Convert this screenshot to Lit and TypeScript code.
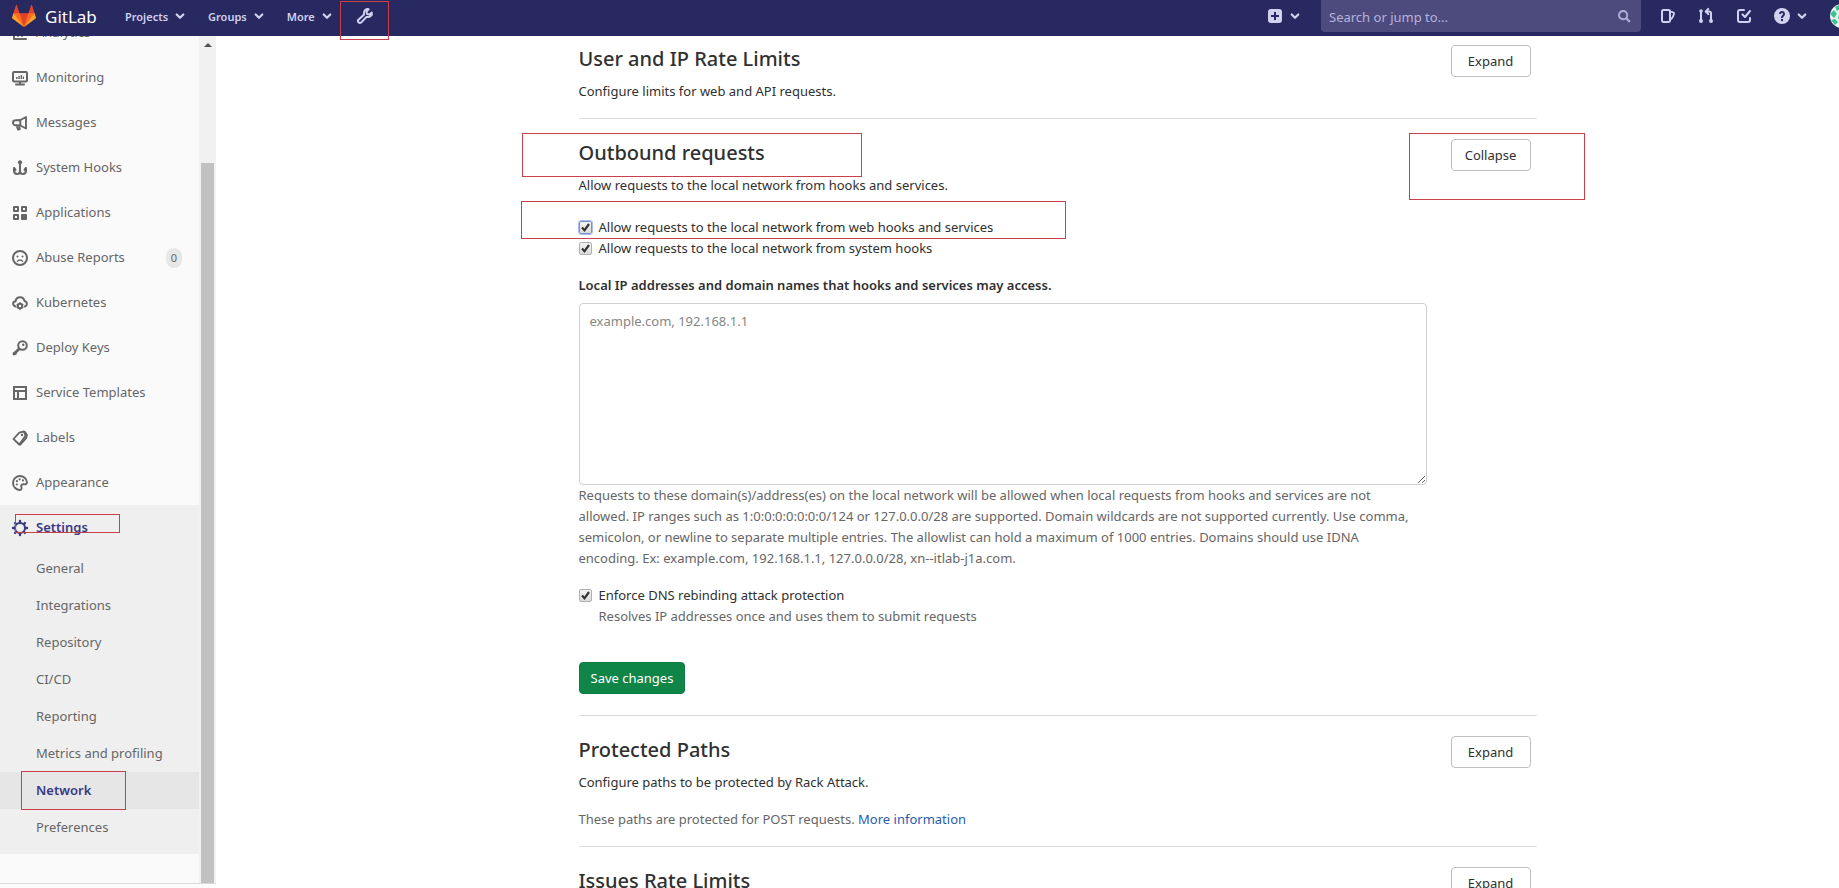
import { LitElement, html, css, svg, nothing } from "lit";
import { customElement, state } from "lit/decorators.js";
import { classMap } from "lit/directives/class-map.js";

const stroke = (d: string, w = 2) =>
  svg`<path d=${d} fill="none" stroke="currentColor" stroke-width=${w} stroke-linecap="round" stroke-linejoin="round"/>`;
const fill = (d: string) => svg`<path d=${d} fill="currentColor" fill-rule="evenodd"/>`;

const icons: Record<string, unknown> = {
  chevron: stroke("M4.7 6.5 8 9.8l3.3-3.3", 2.2),
  wrench: svg`${stroke("M14.8 4.6 12.600 6.500 10 6 9.500 3.600 11.600 1.300C9.300.6 7 2.200 7 4.800L6.900 6.700 1.700 11.400c-1 1-.9 2.200-.1 3 .8.800 2.100.8 3-.2L9.300 9.100l1.800-.1c2.600-.2 4.200-2.200 3.700-4.400z", 2)}`,
  plus: fill("M4 1h8a3 3 0 0 1 3 3v8a3 3 0 0 1-3 3H4a3 3 0 0 1-3-3V4a3 3 0 0 1 3-3zm3 3v3H4v2h3v3h2V9h3V7H9V4z"),
  search: svg`<circle cx="7" cy="7" r="4.7" fill="none" stroke="currentColor" stroke-width="2.2"/>${stroke("m10.8 10.8 3.2 3.2", 2.6)}`,
  issues: svg`${stroke("M3.5 2h5A1.5 1.5 0 0 1 10 3.5v9A1.5 1.5 0 0 1 8.5 14h-5A1.5 1.5 0 0 1 2 12.5v-9A1.5 1.5 0 0 1 3.5 2z", 2)}${stroke("M10.5 3.5 13.200 4.400c.9.3 1.100.9.800 1.800L12.300 9.800 10.500 11.500", 1.8)}`,
  merge: svg`${stroke("M3 3.5v9M9 3.500h2a2 2 0 0 1 2 2v7M10.3.9 7.700 3.500l2.600 2.600", 2)}<circle cx="3" cy="3" r="1.8" fill="currentColor"/><circle cx="3" cy="13" r="2" fill="currentColor"/><circle cx="13" cy="13" r="2" fill="currentColor"/>`,
  todo: stroke("M8 2H4a2 2 0 0 0-2 2v8a2 2 0 0 0 2 2h8a2 2 0 0 0 2-2v-2M6.5 6.500 9 9l5-6", 2),
  question: fill("M8 0a8 8 0 1 1 0 16A8 8 0 0 1 8 0zM7 11v2h2v-2zM5 6h2c0-1.300 2-1.300 2 0 0 1.200-2 1.300-2 4h2c0-1.700 2-2 2-4 0-4-6-4-6 0z"),
  analytics: stroke("M2 2v12h12M6 11V8M10 11V5", 2),
  monitor: svg`${stroke("M2 2h12a1 1 0 0 1 1 1v7.500a1 1 0 0 1-1 1H2a1 1 0 0 1-1-1V3a1 1 0 0 1 1-1zM4 14.500h8M8 12v2", 2)}${fill("M4 7h1.500v2H4zM6.300 6h1.500v3H6.300zM8.600 5h1.500v4H8.600zM10.800 6.500H12V9h-1.200z")}`,
  messages: svg`${stroke("M14 2v11.500L8.500 10.500 3.500 10.300a2.200 2.200 0 0 1 0-5L8.500 5zM8.300 5v5.500M4.500 10.500 6 14.500l1.800-.2L7 10.500", 1.9)}`,
  hook: svg`<circle cx="8" cy="2.3" r="2.1" fill="currentColor"/>${stroke("M8 3v10.500M2 8v2.500c0 4.500 6 4.500 6 .5M14 8v2.500c0 4.500-6 4.500-6 .5M2 8l1.500 2M14 8l-1.500 2", 2.1)}`,
  apps: fill("M2 1h4a1 1 0 0 1 1 1v4a1 1 0 0 1-1 1H2a1 1 0 0 1-1-1V2a1 1 0 0 1 1-1zm1 2v2h2V3zM10 1h4a1 1 0 0 1 1 1v4a1 1 0 0 1-1 1h-4a1 1 0 0 1-1-1V2a1 1 0 0 1 1-1zm1 2v2h2V3zM2 9h4a1 1 0 0 1 1 1v4a1 1 0 0 1-1 1H2a1 1 0 0 1-1-1v-4a1 1 0 0 1 1-1zm1 2v2h2v-2zM10 9h4a1 1 0 0 1 1 1v4a1 1 0 0 1-1 1h-4a1 1 0 0 1-1-1v-4a1 1 0 0 1 1-1z"),
  sad: svg`<circle cx="8" cy="8" r="7" fill="none" stroke="currentColor" stroke-width="2"/><circle cx="5.5" cy="6.5" r="1" fill="currentColor"/><circle cx="10.5" cy="6.5" r="1" fill="currentColor"/>${stroke("M5.5 11.200c.8-1.700 4.200-1.700 5 0", 1.5)}`,
  cloud: svg`${stroke("M3.5 11.500C.5 10.500.3 6.800 3.600 6.300 4.200.7 11.800.9 12.400 6c3.200.6 3.200 4.500.4 5.500", 2)}<circle cx="8" cy="11" r="2.2" fill="none" stroke="currentColor" stroke-width="2"/>${stroke("M8 7.800v.8M8 13.500v1M5.200 9.500l.8.4M10.800 9.500l-.8.4M5.200 12.700l.8-.5M10.800 12.700l-.8-.5", 1.5)}`,
  key: svg`<circle cx="10.5" cy="5.5" r="4.3" fill="none" stroke="currentColor" stroke-width="2"/><circle cx="11.3" cy="4.7" r="1.2" fill="currentColor"/>${stroke("M7 9l-4.800 4.800M3.500 13.500H2v.5", 2.8)}`,
  template: svg`<path d="M2 2h12v12H2zM2 6h12M6 6v8" fill="none" stroke="currentColor" stroke-width="2"/>`,
  labels: svg`${stroke("M1.500 9 7.300 2.600 12 1.500l1.500 4.400L7.200 14.500zM13 2l2 3-1 3.500L8 14.800", 1.8)}<circle cx="10" cy="5" r="1.2" fill="currentColor"/>`,
  palette: svg`${stroke("M8 15a7 7 0 1 1 7-7.500c0 1.800-1.800 2-3 1.800-2-.3-3.300.8-2.700 2.400C9.700 13 9.800 15 8 15z", 1.9)}<circle cx="4.8" cy="9.5" r="1.1" fill="currentColor"/><circle cx="4.9" cy="6.2" r="1.1" fill="currentColor"/><circle cx="7.6" cy="4.3" r="1.1" fill="currentColor"/><circle cx="10.9" cy="5.4" r="1.1" fill="currentColor"/>`,
  gear: svg`<circle cx="8" cy="8" r="5" fill="none" stroke="currentColor" stroke-width="2"/>${stroke("M8 1v1M8 14v1M1 8h1M14 8h1M3.100 3.100l.7.7M12.200 12.200l.7.7M3.100 12.900l.7-.7M12.200 3.800l.7-.7", 2.4)}`,
};

const icon = (name: string) =>
  html`<svg class="icon" viewBox="0 0 16 16" aria-hidden="true">${icons[name]}</svg>`;

const baseStyles = css`
  * {
    box-sizing: border-box;
  }
  a {
    color: inherit;
    text-decoration: none;
  }
  ul {
    list-style: none;
    margin: 0;
    padding: 0;
  }
  .icon {
    width: 16px;
    height: 16px;
    flex: none;
    display: block;
    overflow: visible;
  }
  .marked {
    position: relative;
  }
  .mark {
    position: absolute;
    border: 1px solid #c8404a;
    pointer-events: none;
    z-index: 5;
  }
`;

@customElement("top-bar")
export class TopBar extends LitElement {
  static styles = [
    baseStyles,
    css`
      :host {
        display: block;
        position: relative;
        z-index: 2;
      }
      .bar {
        display: flex;
        align-items: center;
        height: 36px;
        padding: 0 0 4px 12px;
        background: #292961;
        color: #d1d1f0;
        font-size: 11px;
        font-weight: 600;
        overflow-x: clip;
      }
      .brand {
        display: flex;
        align-items: center;
        gap: 9px;
        color: #fff;
        font-size: 17px;
        font-weight: 400;
        width: 113px;
      }
      .logo {
        width: 24px;
        height: 24px;
      }
      .menu {
        display: flex;
        align-items: center;
        gap: 4px;
        margin-right: 20px;
      }
      .tool {
        display: flex;
        align-items: center;
        margin-left: 2px;
      }
      .mark {
        left: -17px;
        top: -7px;
        width: 49px;
        height: 39px;
      }
      .right {
        display: flex;
        align-items: center;
        margin-left: auto;
        height: 32px;
      }
      .new {
        display: flex;
        gap: 4px;
        margin-right: 18px;
      }
      .search {
        display: flex;
        align-items: center;
        width: 320px;
        height: 32px;
        padding: 0 10px 0 8px;
        border-radius: 0 0 4px 4px;
        background: #4d4b7d;
        color: #b0aed6;
      }
      .search input {
        flex: 1;
        min-width: 0;
        border: 0;
        padding: 2px 0 0;
        outline: 0;
        background: none;
        color: inherit;
        font: 400 13px "Noto Sans", sans-serif;
      }
      .search input::placeholder {
        color: #b5b3dc;
      }
      .search .icon {
        width: 14px;
        height: 14px;
      }
      .links {
        display: flex;
        align-items: center;
        gap: 22px;
        margin-left: 19px;
      }
      .help {
        display: flex;
        gap: 4px;
      }
      .avatar {
        width: 9px;
        height: 24px;
        margin-left: 20px;
        overflow: hidden;
      }
      .avatar svg {
        display: block;
        width: 24px;
        height: 24px;
      }
    `,
  ];

  render() {
    return html`
      <header class="bar">
        <a class="brand" href="#">
          <svg class="logo" viewBox="0 0 36 36" aria-hidden="true">
            <path fill="#e24329" d="M2 14l9.380 9v-9l-4-12.280c-.205-.632-1.176-.632-1.380 0z" />
            <path fill="#e24329" d="M34 14l-9.380 9v-9l4-12.280c.205-.632 1.176-.632 1.380 0z" />
            <path fill="#e24329" d="M18 34.380 3 14h30z" />
            <path fill="#fc6d26" d="M18 34.380 11.380 14H2l4 11z" />
            <path fill="#fc6d26" d="M18 34.380 24.620 14H34l-4 11z" />
            <path fill="#fca326" d="M2 14 .1 20.160c-.18.565 0 1.200.5 1.560l17.420 12.660z" />
            <path fill="#fca326" d="M34 14l1.900 6.160c.18.565 0 1.200-.5 1.560L18 34.380z" />
          </svg>
          <span>GitLab</span>
        </a>
        ${["Projects", "Groups", "More"].map(
          (t) => html`<a class="menu" href="#">${t}${icon("chevron")}</a>`
        )}
        <a class="tool marked" href="#" aria-label="Admin Area">${icon("wrench")}<span class="mark"></span></a>
        <div class="right">
          <a class="new" href="#" aria-label="New">${icon("plus")}${icon("chevron")}</a>
          <label class="search">
            <input type="text" placeholder="Search or jump to..." aria-label="Search or jump to" />
            ${icon("search")}
          </label>
          <nav class="links">
            <a href="#" aria-label="Issues">${icon("issues")}</a>
            <a href="#" aria-label="Merge requests">${icon("merge")}</a>
            <a href="#" aria-label="To-Do List">${icon("todo")}</a>
            <a class="help" href="#" aria-label="Help">${icon("question")}${icon("chevron")}</a>
          </nav>
          <a class="avatar" href="#" aria-label="Profile">
            <svg viewBox="0 0 24 24">
              <circle cx="12" cy="12" r="12" fill="#e9f7f1" />
              <path fill="#3fc08f" d="M0 10l4-4 3 4-3 4zM5 3l4-2 2 4-4 2zM1 16l4-1 3 3-3 3zM9 10h4v5H8z" />
            </svg>
          </a>
        </div>
      </header>
    `;
  }
}

@customElement("side-nav")
export class SideNav extends LitElement {
  static styles = [
    baseStyles,
    css`
      :host {
        display: flex;
        flex-direction: column;
        width: 216px;
        flex: none;
        color: #666;
      }
      .pane {
        display: flex;
        flex: 1;
        min-height: 0;
        background: #fafafa;
      }
      .scroller {
        display: flex;
        flex: 1;
        flex-direction: column;
        justify-content: flex-end;
        overflow: hidden;
        padding-bottom: 29px;
      }
      .row {
        display: flex;
        align-items: center;
        gap: 8px;
        height: 45px;
        padding: 0 17px 0 12px;
      }
      .count {
        margin-left: auto;
        padding: 0 5px;
        border-radius: 10px;
        background: #e7e7e7;
        font-size: 11px;
        line-height: 20px;
      }
      .open {
        background: #efefef;
        padding-bottom: 8px;
      }
      .open > .row {
        color: #393982;
        font-weight: 600;
      }
      .sub {
        display: flex;
        align-items: center;
        height: 37px;
        padding-left: 36px;
      }
      .active {
        background: #e6e6e6;
        color: #393982;
        font-weight: 600;
      }
      .settings-mark {
        left: 15px;
        top: 9px;
        width: 105px;
        height: 19px;
      }
      .network-mark {
        left: 21px;
        top: -1px;
        width: 105px;
        height: 39px;
      }
      .track {
        display: flex;
        flex-direction: column;
        align-items: center;
        width: 17px;
        background: #f1f1f1;
      }
      .arrow {
        margin: 7px 0;
        border: 4px solid transparent;
        border-top: 0;
        border-bottom-color: #505050;
      }
      .thumb {
        width: 13px;
        height: 85%;
        margin-top: auto;
        background: #c1c1c1;
      }
      .toggle {
        height: 5px;
        border-top: 1px solid #dbdbdb;
        background: #fcfcfc;
      }
    `,
  ];

  private items = [
    ["analytics", "Analytics"],
    ["monitor", "Monitoring"],
    ["messages", "Messages"],
    ["hook", "System Hooks"],
    ["apps", "Applications"],
    ["sad", "Abuse Reports", "0"],
    ["cloud", "Kubernetes"],
    ["key", "Deploy Keys"],
    ["template", "Service Templates"],
    ["labels", "Labels"],
    ["palette", "Appearance"],
  ];

  private subItems = [
    "General",
    "Integrations",
    "Repository",
    "CI/CD",
    "Reporting",
    "Metrics and profiling",
    "Network",
    "Preferences",
  ];

  render() {
    return html`
      <div class="pane">
        <nav class="scroller" aria-label="Admin navigation">
          <ul>
            ${this.items.map(
              ([name, text, count]) => html`<li>
                <a class="row" href="#">${icon(name)}<span>${text}</span>${count ? html`<span class="count">${count}</span>` : nothing}</a>
              </li>`
            )}
            <li class="open">
              <a class="row marked" href="#">${icon("gear")}<span>Settings</span><span class="mark settings-mark"></span></a>
              <ul>
                ${this.subItems.map((t) => {
                  const on = t === "Network";
                  return html`<li>
                    <a class=${classMap({ sub: true, active: on, marked: on })} href="#">${t}${on ? html`<span class="mark network-mark"></span>` : nothing}</a>
                  </li>`;
                })}
              </ul>
            </li>
          </ul>
        </nav>
        <div class="track" aria-hidden="true"><span class="arrow"></span><span class="thumb"></span></div>
      </div>
      <div class="toggle"></div>
    `;
  }
}

@customElement("network-settings")
export class NetworkSettings extends LitElement {
  static styles = [
    baseStyles,
    css`
      :host {
        display: block;
        flex: 1;
        min-width: 0;
        padding: 0 16px 0 76px;
        overflow: hidden;
      }
      .content {
        max-width: 958px;
        margin: 0 auto;
      }
      section {
        position: relative;
        padding: 20px 0 16px;
        border-bottom: 1px solid #dbdbdb;
      }
      section:first-child {
        padding-top: 9px;
      }
      section.expanded {
        padding-bottom: 21px;
      }
      .head {
        display: flex;
        justify-content: space-between;
        align-items: flex-start;
        padding-right: 6px;
      }
      h4 {
        margin: 0 0 8px;
        font-size: 20px;
        line-height: 28px;
        font-weight: 500;
      }
      p {
        margin: 0;
      }
      .more {
        margin-top: 16px;
        color: #666;
      }
      .more a {
        color: #2a5db0;
      }
      button {
        height: 32px;
        border-radius: 4px;
        font: 400 13px "Noto Sans", sans-serif;
      }
      .toggle {
        width: 80px;
        padding: 0;
        border: 1px solid #bfbfbf;
        background: #fff;
        color: #303030;
      }
      .save {
        margin-top: 35px;
        padding: 0 11px;
        border: 1px solid #0f7a41;
        background: #108548;
        color: #fff;
      }
      form {
        margin-top: 21px;
        max-width: 848px;
      }
      .check {
        display: flex;
        align-items: center;
        gap: 7px;
      }
      .check input {
        appearance: none;
        width: 13px;
        height: 13px;
        margin: 0;
        border: 1px solid #b0b0b0;
        border-radius: 2px;
        background: url("data:image/svg+xml,%3Csvg xmlns='http://www.w3.org/2000/svg' viewBox='0 0 11 11'%3E%3Cpath d='M2 5.500l2.500 2.800L9 2' fill='none' stroke='%23333' stroke-width='2.200'/%3E%3C/svg%3E"),
          linear-gradient(#f2f2f2, #dcdcdc);
      }
      .check input.focused {
        border-color: #7a8fd0;
        outline: 1px solid #a9bdf0;
      }
      .label {
        display: block;
        margin: 16px 0 7px;
        font-weight: 600;
      }
      textarea {
        display: block;
        width: 100%;
        height: 182px;
        padding: 7px 10px;
        border: 1px solid #d0d0d0;
        border-radius: 4px;
        background: #fff;
        color: #303030;
        font: 400 13px/21px "Noto Sans", sans-serif;
      }
      textarea::placeholder {
        color: #868686;
      }
      .hint {
        padding-right: 8px;
        color: #666;
      }
      .hint + .check {
        margin-top: 16px;
      }
      .indent {
        padding-left: 20px;
      }
      .title-mark {
        left: -57px;
        top: 14px;
        width: 340px;
        height: 44px;
      }
      .collapse-mark {
        right: -48px;
        top: 14px;
        width: 176px;
        height: 67px;
      }
      .hooks-mark {
        left: -58px;
        top: -16px;
        width: 545px;
        height: 38px;
      }
    `,
  ];

  @state() private value = "";

  private head(title: string, action: string, text: string) {
    return html`<div class="head">
        <h4>${title}</h4>
        <button class="toggle" type="button">${action}</button>
      </div>
      <p>${text}</p>`;
  }

  render() {
    return html`
      <main class="content">
        <section>${this.head("User and IP Rate Limits", "Expand", "Configure limits for web and API requests.")}</section>
        <section class="expanded">
          <span class="mark title-mark"></span>
          <span class="mark collapse-mark"></span>
          ${this.head("Outbound requests", "Collapse", "Allow requests to the local network from hooks and services.")}
          <form @submit=${(e: Event) => e.preventDefault()}>
            <label class="check marked">
              <input class="focused" type="checkbox" checked />Allow requests to the local network from web hooks and services
              <span class="mark hooks-mark"></span>
            </label>
            <label class="check"><input type="checkbox" checked />Allow requests to the local network from system hooks</label>
            <label class="label" for="allowlist">Local IP addresses and domain names that hooks and services may access.</label>
            <textarea
              id="allowlist"
              placeholder="example.com, 192.168.1.1"
              .value=${this.value}
              @input=${(e: Event) => (this.value = (e.target as HTMLTextAreaElement).value)}
            ></textarea>
            <p class="hint">
              Requests to these domain(s)/address(es) on the local network will be allowed when local requests from hooks and
              services are not allowed. IP ranges such as 1:0:0:0:0:0:0:0/124 or 127.0.0.0/28 are supported. Domain wildcards
              are not supported currently. Use comma, semicolon, or newline to separate multiple entries. The allowlist can
              hold a maximum of 1000 entries. Domains should use IDNA encoding. Ex: example.com, 192.168.1.1, 127.0.0.0/28,
              xn--itlab-j1a.com.
            </p>
            <label class="check"><input type="checkbox" checked />Enforce DNS rebinding attack protection</label>
            <p class="hint indent">Resolves IP addresses once and uses them to submit requests</p>
            <button class="save" type="submit">Save changes</button>
          </form>
        </section>
        <section>
          ${this.head("Protected Paths", "Expand", "Configure paths to be protected by Rack Attack.")}
          <p class="more">These paths are protected for POST requests. <a href="#">More information</a></p>
        </section>
        <section>${this.head("Issues Rate Limits", "Expand", "Configure limit for issues created per minute by web and API requests.")}</section>
      </main>
    `;
  }
}

@customElement("app-root")
export class AppRoot extends LitElement {
  static styles = css`
    :host {
      display: flex;
      flex-direction: column;
      height: 100vh;
      overflow: hidden;
      background: #fff;
      color: #303030;
      font: 400 13px/21px "Noto Sans", sans-serif;
    }
    .body {
      display: flex;
      flex: 1;
      min-height: 0;
    }
  `;

  render() {
    return html`
      <top-bar></top-bar>
      <div class="body">
        <side-nav></side-nav>
        <network-settings></network-settings>
      </div>
    `;
  }
}
